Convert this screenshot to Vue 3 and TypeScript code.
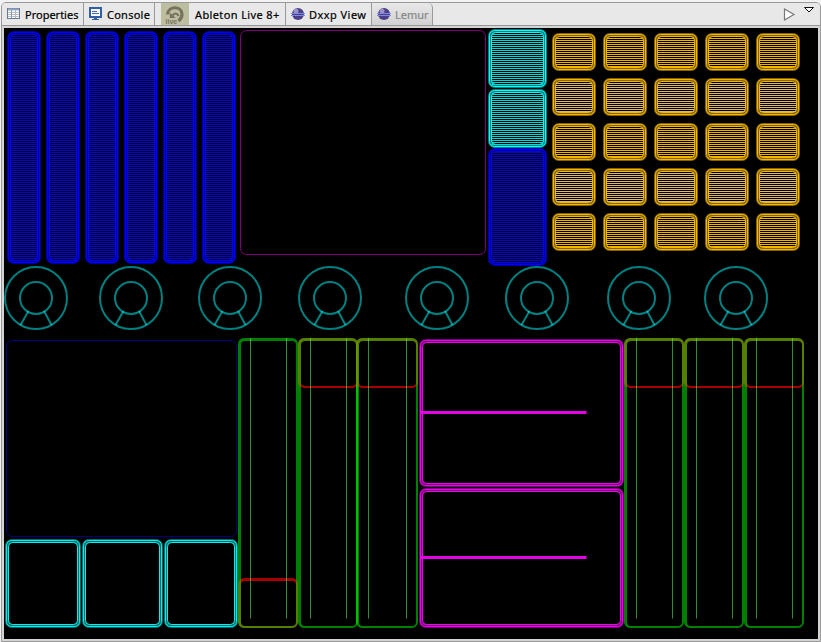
<script setup lang="ts">
interface Box { x: number; y: number; w: number; h: number }
interface Pad extends Box { color: string; dim: string; fill?: string; offset?: number }
interface Fader extends Box { knob: Box | null; guides: number[] }

const blues: Pad[] = [7, 46, 85, 124, 163, 202].map((x) => ({
  x, y: 31, w: 34, h: 233, color: '#0000ff', dim: '#000099', fill: '#0000ec',
}))

const switches: Pad[] = [
  { x: 488, y: 148, w: 59, h: 118, color: '#0000f4', dim: '#000099', fill: '#0000e6', offset: 4.5 },
  { x: 488, y: 29, w: 59, h: 59, color: '#00ffff', dim: '#007f7f', fill: '#00d8d8' },
  { x: 488, y: 89, w: 59, h: 59, color: '#00ffff', dim: '#007f7f', fill: '#00d8d8' },
]

const grid: Pad[] = Array.from({ length: 25 }, (_, i) => ({
  x: 552 + (i % 5) * 51,
  y: 33 + Math.floor(i / 5) * 45,
  w: 44,
  h: 38,
  color: '#f5b800',
  dim: '#866500',
  fill: Math.floor(i / 5) % 2 ? '#dcb868' : '#f0b400',
}))

const frames: Pad[] = [
  { x: 5, y: 539, w: 76, h: 89, color: '#00f0f0', dim: '#006c6c' },
  { x: 82, y: 539, w: 81, h: 89, color: '#00f0f0', dim: '#006c6c' },
  { x: 164, y: 539, w: 74, h: 89, color: '#00f0f0', dim: '#006c6c' },
  { x: 419, y: 339, w: 205, h: 148, color: '#f000f0', dim: '#780078' },
  { x: 419, y: 488, w: 205, h: 140, color: '#f000f0', dim: '#780078' },
]

const pads: Pad[] = [...blues, ...switches, ...grid, ...frames]
const knobs: number[] = [36, 131, 230, 330, 437, 537, 639, 736]

function fader(x: number, w: number, guides: number[], low = false): Fader {
  return { x, y: 338, w, h: 290, guides, knob: low ? { x, y: 578, w, h: 50 } : { x, y: 338, w, h: 50 } }
}
const faders: Fader[] = [
  fader(238, 60, [250, 286], true),
  fader(298, 60, [310, 346]),
  fader(356, 62, [368, 406]),
  fader(624, 60, [636, 672]),
  fader(684, 60, [696, 732]),
  fader(744, 60, [756, 792]),
]

function round(x: number, y: number, w: number, h: number, r: number): string {
  return `M${x + r} ${y}h${w - 2 * r}a${r} ${r} 0 0 1 ${r} ${r}v${h - 2 * r}a${r} ${r} 0 0 1 ${-r} ${r}h${2 * r - w}a${r} ${r} 0 0 1 ${-r} ${-r}v${2 * r - h}a${r} ${r} 0 0 1 ${r} ${-r}z`
}
/* Heavier on the top and left than on the bottom and right. */
function ring(b: Box): string {
  return round(b.x, b.y, b.w, b.h, 6) + round(b.x + 3, b.y + 3, b.w - 5, b.h - 5, 4)
}
function stripes(p: Pad): string {
  let d = ''
  for (let y = p.y + (p.offset ?? 5.5); y < p.y + p.h - 3; y += 2) d += `M${p.x + 4} ${y}h${p.w - 8}`
  return d
}
</script>

<template>
  <div class="window">
    <div class="tabs">
      <div class="tab properties">
        <svg class="icon" width="14" height="12" viewBox="0 0 14 12">
          <rect x=".5" y=".5" width="12" height="10" fill="#fff" stroke="#6a7894" />
          <path d="M1 1.5h11" stroke="#93a7c8" stroke-width="2" />
          <path d="M1 4.5h11M1 6.5h11M1 8.5h11" stroke="#b8c0cd" />
          <path d="M4.500 2v8" stroke="#8c9ab3" />
          <path d="M8.500 2v8" stroke="#b0b9c9" />
        </svg>
        <span>Properties</span>
      </div>
      <div class="tab console">
        <svg class="icon" width="14" height="14" viewBox="0 0 14 14">
          <rect x="1" y="1" width="11" height="9" fill="#f7faff" stroke="#315f9f" stroke-width="2" />
          <path d="M3 4.5h5M3 6.5h7" stroke="#486ea6" />
          <path d="M5 11h3v1h2v1H3v-1h2z" fill="#315f9f" />
        </svg>
        <span>Console</span>
      </div>
      <div class="tab live">
        <svg class="icon" width="28" height="22" viewBox="0 0 28 22">
          <rect width="28" height="22" fill="#bdbda0" />
          <path d="M6.500 11.500C7 2.500 21 2.500 21 11.500c0 3-1.200 4.500-3.500 6.500" fill="none" stroke="#77725c" stroke-width="3.200" />
          <path d="M11.500 12.500c2-3 5-2.500 6 .5" fill="none" stroke="#77725c" stroke-width="2.200" />
          <path d="M8.800 9.500v5.500h6z" fill="#77725c" />
          <text x="4.500" y="20.500" class="live-text">live</text>
        </svg>
        <span>Ableton Live 8+</span>
      </div>
      <div class="tab dxxp">
        <svg class="icon" width="14" height="14" viewBox="0 0 14 14">
          <circle cx="7" cy="7" r="6" fill="#4b4088" />
          <circle cx="5" cy="4" r="2.500" fill="#9c91c7" />
          <path d="M0 6.500h14M0 8.500h14" stroke="#8088dd" />
        </svg>
        <span>Dxxp View</span>
      </div>
      <div class="tab lemur">
        <svg class="icon" width="14" height="14" viewBox="0 0 14 14">
          <circle cx="7" cy="7" r="6" fill="#4b4088" />
          <circle cx="5" cy="4" r="2.500" fill="#9c91c7" />
          <path d="M0 6.500h14M0 8.500h14" stroke="#8088dd" />
        </svg>
        <span>Lemur</span>
      </div>
      <svg class="tools" width="34" height="18" viewBox="0 0 34 18">
        <path d="M1.500 3v11l9.500-5.500z" fill="#fff" stroke="#777" stroke-width="1.200" />
        <path d="M21.500 1.500h9l-4.500 4.500z" fill="#fff" stroke="#111" />
      </svg>
    </div>

    <svg class="surface" width="814" height="611" viewBox="4 28 814 611">
      <rect x="240.500" y="30.500" width="245" height="224" rx="6" fill="none" stroke="#800080" />
      <rect x="6.500" y="340.500" width="230" height="196" rx="6" fill="none" stroke="#000080" />

      <g v-for="(p, i) in pads" :key="'p' + i" fill="none">
        <rect :x="p.x + 2" :y="p.y + 2" :width="p.w - 4" :height="p.h - 4" rx="5" :stroke="p.dim" stroke-width="4" />
        <rect :x="p.x + 1.5" :y="p.y + 1.5" :width="p.w - 3" :height="p.h - 3" rx="5" :stroke="p.color" />
        <rect :x="p.x + 3.5" :y="p.y + 3.5" :width="p.w - 7" :height="p.h - 7" rx="4" :stroke="p.color" />
        <path v-if="p.fill" :d="stripes(p)" :stroke="p.fill" />
      </g>

      <g v-for="x in knobs" :key="'k' + x" fill="none" stroke="#00ffff" stroke-opacity=".5" stroke-width="2">
        <circle :cx="x" cy="298" r="31" />
        <circle :cx="x" cy="298" r="16" />
        <path :d="`M${x - 7.5} 311L${x - 15.5} 325M${x + 8} 311L${x + 15.5} 325`" />
      </g>

      <g v-for="f in faders" :key="'f' + f.x">
        <path v-if="f.knob" :d="ring(f.knob)" fill="#ff0000" fill-opacity=".66" fill-rule="evenodd" />
        <path :d="ring(f)" fill="#00ff00" fill-opacity=".5" fill-rule="evenodd" />
        <path v-for="g in f.guides" :key="g" :d="`M${g + 0.5} 338V618.5`" stroke="#60ff60" stroke-opacity=".55" />
      </g>

      <path d="M421 412.500H586.500M421 557.500H586.500" stroke="#e600e6" stroke-width="3" />
    </svg>
  </div>
</template>

<style>
body { margin: 0; background: #f2f2f2; }
</style>

<style scoped>
.window {
  box-sizing: border-box;
  width: 820px;
  height: 640px;
  margin: 2px 0 0 1px;
  border: 1px solid #9a9a9a;
  border-radius: 5px 5px 0 0;
  background: #d4d4d4;
  overflow: hidden;
}
.tabs {
  box-sizing: border-box;
  display: flex;
  height: 23px;
  border-bottom: 1px solid #969696;
  background: #e8e8e8;
}
.tab {
  box-sizing: border-box;
  display: flex;
  align-items: center;
  height: 22px;
  border-right: 1px solid #9a9a9a;
  font: 11px/20px "Noto Sans", "Open Sans", sans-serif;
  color: #000;
  white-space: nowrap;
}
.tab span { padding-top: 2px; -webkit-text-stroke: 0.2px currentColor; }
.icon { flex: none; display: block; }
.properties { width: 82px; padding-left: 5px; gap: 4px; }
.console { width: 71px; padding-left: 5px; gap: 4px; letter-spacing: 0.25px; }
.live { width: 131px; padding-left: 6px; gap: 6px; letter-spacing: 0.38px; }
.dxxp { width: 86px; padding-left: 5px; gap: 4px; letter-spacing: 0.45px; }
.lemur {
  width: 61px;
  padding-left: 5px;
  gap: 4px;
  border-radius: 5px 5px 0 0;
  background: linear-gradient(#e8e8e8, #d2d2d2);
  color: #888;
}
.live-text { font: bold 7px "Liberation Sans", sans-serif; letter-spacing: 0; fill: #77725c; }
.tools { margin: 3px 3px 0 auto; }
.surface { display: block; margin: 2px 0 0 2px; background: #000; }
</style>
